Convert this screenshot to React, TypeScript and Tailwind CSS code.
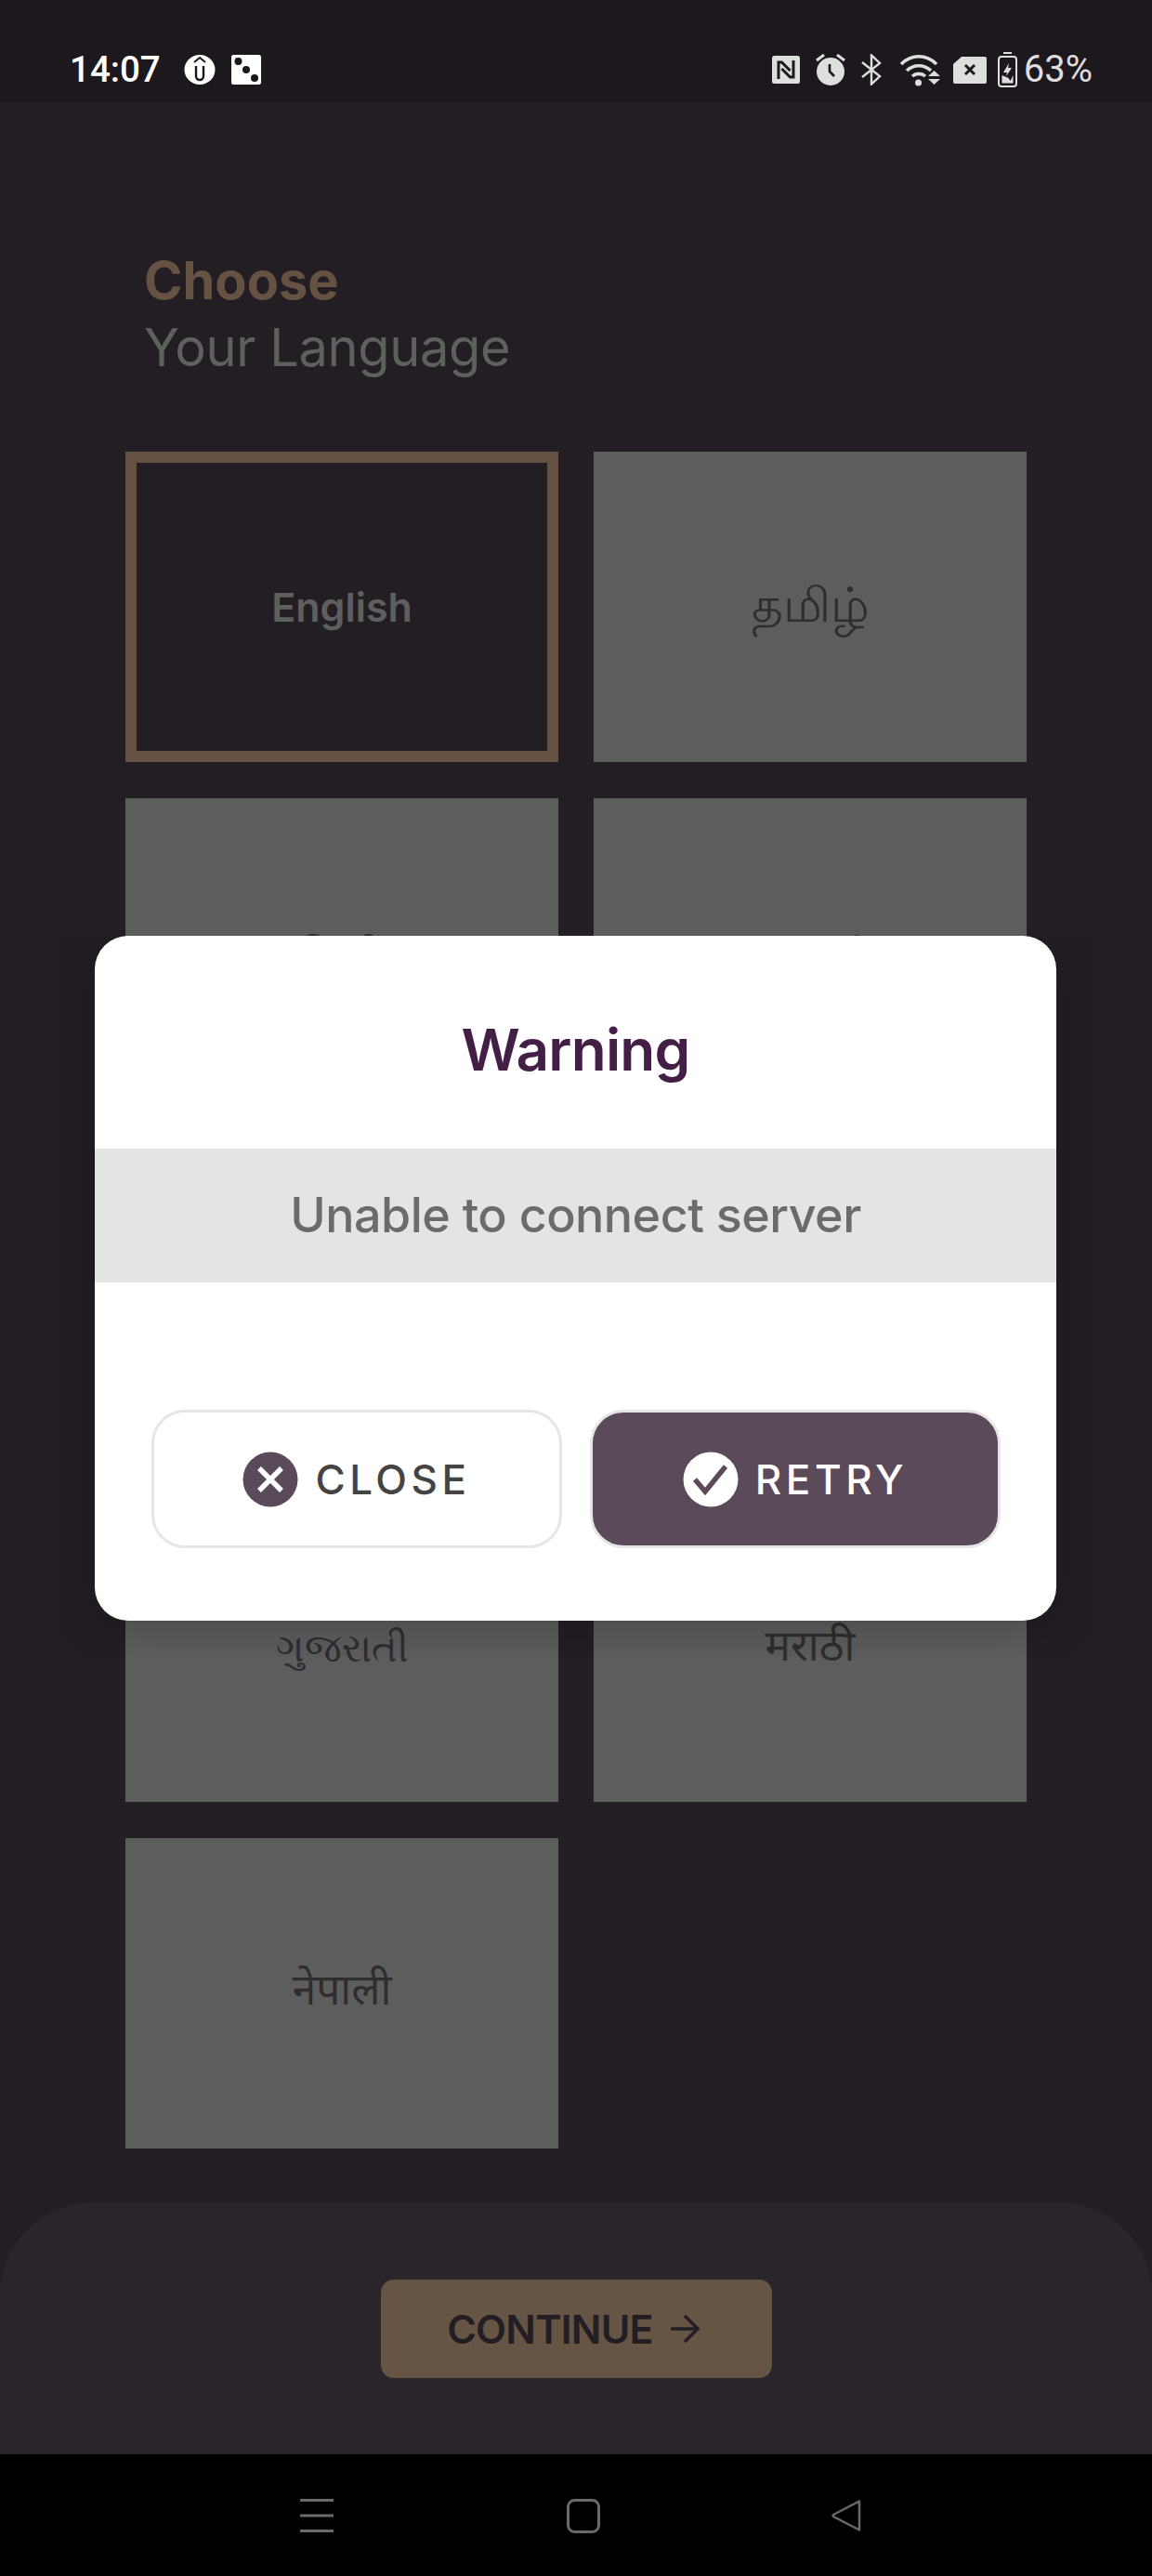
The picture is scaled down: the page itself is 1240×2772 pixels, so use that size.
const sans = "font-['Inter','Noto_Sans',sans-serif]";

function ClipIcon() {
  return (
    <svg width="34" height="32" viewBox="0 0 34 32">
      <ellipse cx="17" cy="16" rx="16.5" ry="16" fill="#fff" />
      <path d="M11 8l6-5 6 5" fill="none" stroke="#1d181e" strokeWidth="2" />
      <path d="M13 12v11a4 4 0 0 0 8 0V12" fill="none" stroke="#1d181e" strokeWidth="2.4" />
    </svg>
  );
}

function DiceIcon() {
  return (
    <svg width="32" height="32" viewBox="0 0 32 32">
      <rect width="32" height="32" rx="2.5" fill="#fff" />
      <circle cx="7.5" cy="7" r="4" fill="#1d181e" />
      <circle cx="16" cy="16" r="4" fill="#1d181e" />
      <circle cx="25" cy="25" r="4" fill="#1d181e" />
    </svg>
  );
}

function NfcIcon() {
  return (
    <svg width="30" height="30" viewBox="0 0 30 30">
      <rect width="30" height="30" rx="2.5" fill="#dfdedf" />
      <path d="M7 25V7h3.500l9 9" fill="none" stroke="#1d181e" strokeWidth="3" />
      <path d="M23 5v18h-3.500l-9-9" fill="none" stroke="#1d181e" strokeWidth="3" />
    </svg>
  );
}

function AlarmIcon() {
  return (
    <svg width="32" height="34" viewBox="0 0 32 34">
      <circle cx="16" cy="19" r="15" fill="#dfdedf" />
      <path d="M15 11v8l5 5" fill="none" stroke="#1d181e" strokeWidth="2.6" />
      <path d="M1 7l8-6M31 7l-8-6" stroke="#dfdedf" strokeWidth="3" />
    </svg>
  );
}

function BluetoothIcon() {
  return (
    <svg width="22" height="34" viewBox="0 0 22 34">
      <path d="M1 9l19 15-9 8.500V1.500l9 8.500L1 25" fill="none" stroke="#dfdedf" strokeWidth="2.4" />
    </svg>
  );
}

function WifiIcon() {
  return (
    <svg width="44" height="36" viewBox="0 0 44 36">
      <g fill="none" stroke="#dfdedf" strokeWidth="3.600">
        <path d="M2 12c11-11 27-11 38 0" />
        <path d="M8 19c7.500-7 18.500-7 26 0" />
        <path d="M14 25c4-3.500 10-3.500 14 0" />
      </g>
      <circle cx="20.500" cy="32" r="3.500" fill="#dfdedf" />
      <path d="M31 25h13l-6.500-6zM31 28h13l-6.500 6z" fill="#dfdedf" />
    </svg>
  );
}

function SimIcon() {
  return (
    <svg width="36" height="29" viewBox="0 0 36 29">
      <path d="M9 0h25a2 2 0 0 1 2 2v25a2 2 0 0 1-2 2H2a2 2 0 0 1-2-2V8z" fill="#dfdedf" />
      <path d="M13 9l10 10M23 9L13 19" stroke="#1d181e" strokeWidth="3" />
    </svg>
  );
}

function BatteryIcon() {
  return (
    <svg width="21" height="38" viewBox="0 0 21 38">
      <path d="M6 1h9" stroke="#dfdedf" strokeWidth="2" />
      <rect x="1" y="5" width="19" height="32" rx="3" fill="none" stroke="#dfdedf" strokeWidth="2" />
      <path d="M12 12l-6 10h4l-1 4 6-9h-4z" fill="#dfdedf" />
      <path d="M4.500 25v8.500h12V25l-3 6-2-3z" fill="#dfdedf" />
    </svg>
  );
}

function StatusBar() {
  return (
    <div className="h-[110px] bg-[#1d181e] flex items-center pl-[75px] pr-[64px] pt-[60px] pb-[20px] shrink-0 font-['Roboto',sans-serif]">
      <span className="text-[38.5px] leading-none font-medium text-white">14:07</span>
      <div className="flex items-center gap-[17px] ml-[25px]">
        <ClipIcon />
        <DiceIcon />
      </div>
      <div className="flex items-center ml-auto">
        <div className="flex items-center mr-[7px]">
          <div className="mr-[17px]"><NfcIcon /></div>
          <div className="mr-[17px]"><AlarmIcon /></div>
          <div className="mr-[19px]"><BluetoothIcon /></div>
          <div className="mr-[14px]"><WifiIcon /></div>
          <div className="mr-[12px]"><SimIcon /></div>
          <BatteryIcon />
        </div>
        <span className="text-[40px] leading-none text-[#dfdedf]">63%</span>
      </div>
    </div>
  );
}

function LangCard({ label, labelClass }: { label?: string; labelClass?: string }) {
  return (
    <div className="h-[334px] bg-[#5d5d5d] flex items-center justify-center">
      <span className={`text-[#2f2d2f] ${labelClass}`}>{label}</span>
    </div>
  );
}

function Modal() {
  return (
    <div className="absolute left-[63px] top-[1007px] w-[1113px] h-[775px] overflow-hidden px-[39px]">
      <div className="h-[737px] bg-white rounded-[36px] flex flex-col shadow-[0_8px_50px_rgba(0,0,0,0.22)]">
        <div className="h-[229px] pt-[16px] flex items-center justify-center text-[62px] font-semibold tracking-[-0.8px] text-[#431f45]">
          Warning
        </div>
        <div className="h-[144px] bg-[#e4e4e4] flex items-center justify-center text-[52px] font-medium tracking-[-0.5px] text-[#6b6b6b]">
          Unable to connect server
        </div>
        <div className="flex gap-[30px] pl-[61px] pr-[60px] pt-[137px]">
          <button className="flex-1 h-[149px] rounded-[36px] border-[3px] border-[#e6e6e6] bg-white flex items-center justify-center gap-[18px] text-[44px] font-medium tracking-[4.5px] text-[#444444]">
            <svg width="60" height="60" viewBox="0 0 60 60">
              <circle cx="30" cy="30" r="29.500" fill="#5b4a5a" />
              <path d="M18 18l24 24M42 18L18 42" stroke="#fff" strokeWidth="5.500" />
            </svg>
            CLOSE
          </button>
          <button className="flex-1 h-[149px] rounded-[36px] border-[3px] border-[#e6e6e6] bg-[#5b4a5a] flex items-center justify-center gap-[18px] text-[44px] font-medium tracking-[4.5px] text-white">
            <svg width="60" height="60" viewBox="0 0 60 60">
              <circle cx="30" cy="30" r="29.500" fill="#fff" />
              <path d="M13 30l11 13 22-27" fill="none" stroke="#5b4a5a" strokeWidth="5.500" />
            </svg>
            RETRY
          </button>
        </div>
      </div>
    </div>
  );
}

export default function App() {
  return (
    <div className={`relative w-[1240px] h-[2772px] bg-[#231e24] flex flex-col overflow-hidden ${sans}`}>
      <StatusBar />

      <div className="flex-1 flex flex-col">
        <div className="pl-[155px] pt-[156px] h-[376px] text-[56px] leading-[72px]">
          <div className="font-bold text-[#655243]">Choose</div>
          <div className="text-[#5f5f5f] tracking-[-0.4px]">Your Language</div>
        </div>

        <div className="grid grid-cols-[466px_466px] gap-x-[38px] gap-y-[39px] pl-[135px]">
          <div className="h-[334px] border-[12px] border-[#655243] flex items-center justify-center">
            <span className="text-[43px] font-semibold text-[#5f5f5f]">English</span>
          </div>
          <LangCard label="தமிழ்" labelClass="text-[52px] pb-[4px]" />
          <LangCard label="हिन्दी" labelClass="text-[46px] pt-[8px]" />
          <LangCard label="తెలుగు" labelClass="text-[50px] pb-[4px]" />
          <LangCard />
          <LangCard />
          <LangCard label="ગુજરાતી" labelClass="text-[42px]" />
          <LangCard label="मराठी" labelClass="text-[46px] pb-[4px]" />
          <LangCard label="नेपाली" labelClass="text-[46px] pb-[9px]" />
        </div>

        <div className="mt-auto h-[271px] bg-[#2a252b] rounded-t-[100px] flex items-start justify-center pt-[83px]">
          <button className="w-[421px] h-[106px] pr-[6px] rounded-[14px] bg-[#665445] flex items-center justify-center gap-[18px] text-[43px] font-semibold tracking-[-0.8px] text-[#231e24]">
            CONTINUE
            <svg width="32" height="32" viewBox="0 0 32 32">
              <path d="M1 16h28M16 2l14 14-14 14" fill="none" stroke="#231e24" strokeWidth="3.500" />
            </svg>
          </button>
        </div>
      </div>

      <div className="h-[131px] bg-black shrink-0 flex items-start pt-[48px] pl-[323px]">
        <svg width="36" height="36" viewBox="0 0 36 36">
          <path d="M0 1.500h36M0 18h36M0 34.500h36" stroke="#6a6a6a" strokeWidth="3" />
        </svg>
        <svg className="ml-[251px]" width="36" height="37" viewBox="0 0 36 37">
          <rect x="1.500" y="1.500" width="33" height="34" rx="7" fill="none" stroke="#6a6a6a" strokeWidth="3" />
        </svg>
        <svg className="ml-[248px]" width="34" height="36" viewBox="0 0 34 36">
          <path d="M31 2.500L3 17a1.500 1.500 0 0 0 0 2l28 14.500z" fill="none" stroke="#6a6a6a" strokeWidth="2.500" strokeLinejoin="round" />
        </svg>
      </div>

      <Modal />
    </div>
  );
}
